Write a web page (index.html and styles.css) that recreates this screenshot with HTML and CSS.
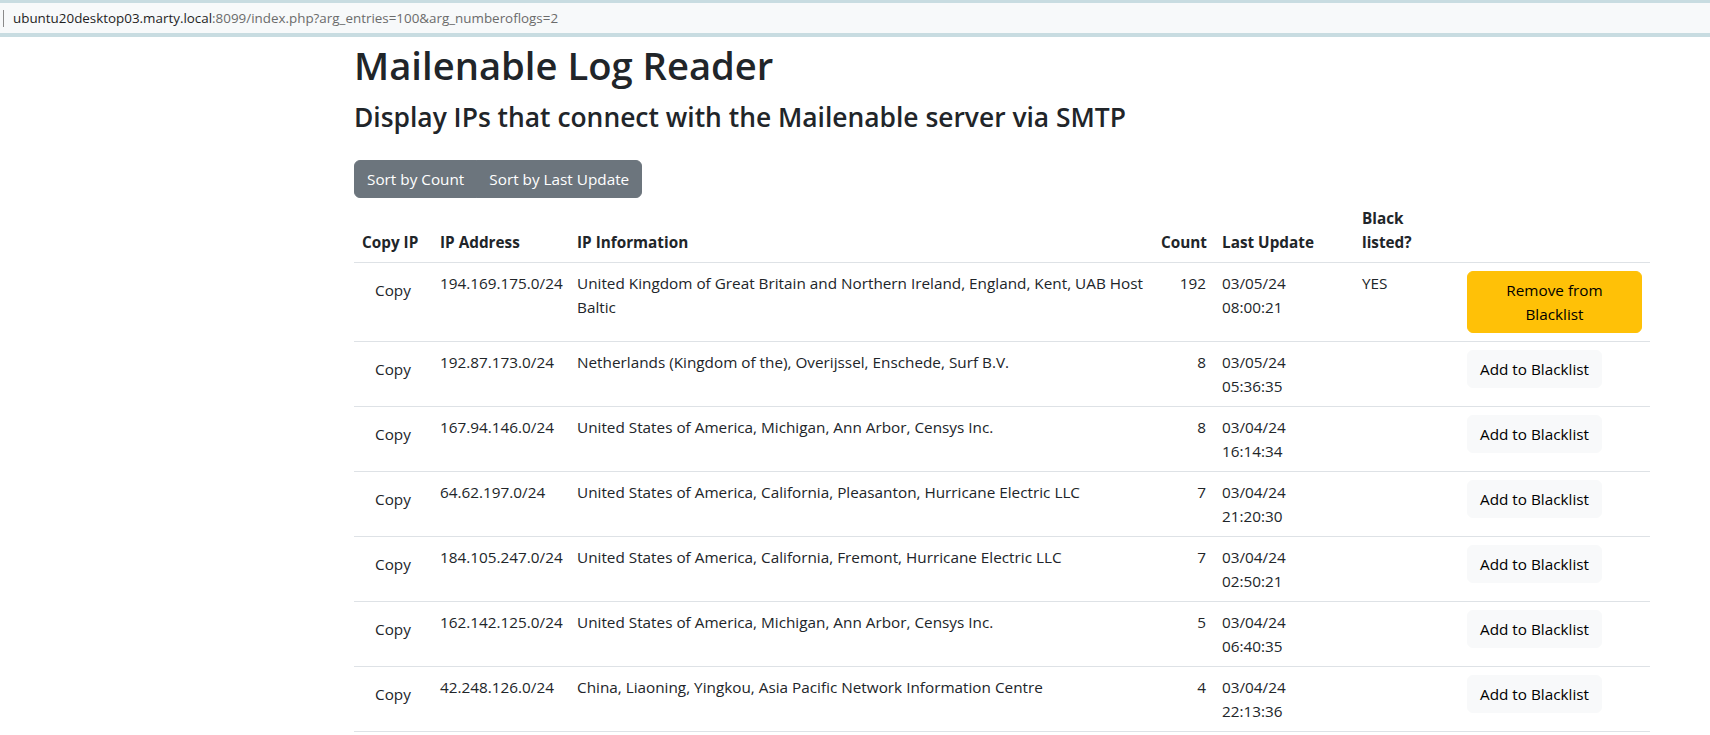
FILE: index.html
```html
<!DOCTYPE html>
<html lang="en">
<head>
<meta charset="utf-8">
<title>Mailenable Log Reader</title>
<link rel="stylesheet" href="styles.css">
</head>
<body>
<div class="urlbar">
  <span class="caret"></span>
  <span class="url"><span class="host">ubuntu20desktop03.marty.local</span><span class="path">:8099/index.php?arg_entries=100&amp;arg_numberoflogs=2</span></span>
</div>
<main class="container">
  <h1 class="title">Mailenable Log Reader</h1>
  <h3 class="subtitle">Display IPs that connect with the Mailenable server via SMTP</h3>
  <div class="btn-group">
    <button class="btn btn-secondary">Sort by Count</button>
    <button class="btn btn-secondary">Sort by Last Update</button>
  </div>
  <table class="table">
    <colgroup>
      <col class="c-copy"><col class="c-ip"><col class="c-info"><col class="c-count"><col class="c-date"><col class="c-bl"><col class="c-act">
    </colgroup>
    <thead>
      <tr>
        <th>Copy IP</th>
        <th>IP Address</th>
        <th>IP Information</th>
        <th>Count</th>
        <th>Last Update</th>
        <th><span class="blk">Black</span> <span class="blk">listed?</span></th>
        <th></th>
      </tr>
    </thead>
    <tbody>
      <tr>
        <td><button class="btn btn-plain">Copy</button></td>
        <td>194.169.175.0/24</td>
        <td>United Kingdom of Great Britain and Northern Ireland, England, Kent, UAB Host Baltic</td>
        <td class="num">192</td>
        <td><span class="blk">03/05/24</span> <span class="blk">08:00:21</span></td>
        <td>YES</td>
        <td><button class="btn btn-warning btn-wide">Remove from<br>Blacklist</button></td>
      </tr>
      <tr>
        <td><button class="btn btn-plain">Copy</button></td>
        <td>192.87.173.0/24</td>
        <td>Netherlands (Kingdom of the), Overijssel, Enschede, Surf B.V.</td>
        <td class="num">8</td>
        <td><span class="blk">03/05/24</span> <span class="blk">05:36:35</span></td>
        <td></td>
        <td><button class="btn btn-light">Add to Blacklist</button></td>
      </tr>
      <tr>
        <td><button class="btn btn-plain">Copy</button></td>
        <td>167.94.146.0/24</td>
        <td>United States of America, Michigan, Ann Arbor, Censys Inc.</td>
        <td class="num">8</td>
        <td><span class="blk">03/04/24</span> <span class="blk">16:14:34</span></td>
        <td></td>
        <td><button class="btn btn-light">Add to Blacklist</button></td>
      </tr>
      <tr>
        <td><button class="btn btn-plain">Copy</button></td>
        <td>64.62.197.0/24</td>
        <td>United States of America, California, Pleasanton, Hurricane Electric LLC</td>
        <td class="num">7</td>
        <td><span class="blk">03/04/24</span> <span class="blk">21:20:30</span></td>
        <td></td>
        <td><button class="btn btn-light">Add to Blacklist</button></td>
      </tr>
      <tr>
        <td><button class="btn btn-plain">Copy</button></td>
        <td>184.105.247.0/24</td>
        <td>United States of America, California, Fremont, Hurricane Electric LLC</td>
        <td class="num">7</td>
        <td><span class="blk">03/04/24</span> <span class="blk">02:50:21</span></td>
        <td></td>
        <td><button class="btn btn-light">Add to Blacklist</button></td>
      </tr>
      <tr>
        <td><button class="btn btn-plain">Copy</button></td>
        <td>162.142.125.0/24</td>
        <td>United States of America, Michigan, Ann Arbor, Censys Inc.</td>
        <td class="num">5</td>
        <td><span class="blk">03/04/24</span> <span class="blk">06:40:35</span></td>
        <td></td>
        <td><button class="btn btn-light">Add to Blacklist</button></td>
      </tr>
      <tr>
        <td><button class="btn btn-plain">Copy</button></td>
        <td>42.248.126.0/24</td>
        <td>China, Liaoning, Yingkou, Asia Pacific Network Information Centre</td>
        <td class="num">4</td>
        <td><span class="blk">03/04/24</span> <span class="blk">22:13:36</span></td>
        <td></td>
        <td><button class="btn btn-light">Add to Blacklist</button></td>
      </tr>
    </tbody>
  </table>
</main>
</body>
</html>
```

FILE: styles.css
```css
html, body {
  margin: 0;
  padding: 0;
  background: #fff;
}
body {
  font-family: "Open Sans", "Noto Sans", "Liberation Sans", sans-serif;
  font-size: 15.3px;
  line-height: 24px;
  color: #212529;
}

.urlbar {
  height: 30px;
  border-top: 3px solid #c8dce1;
  border-bottom: 4px solid #c8dce1;
  background: #f7f9fa;
  display: flex;
  align-items: center;
  padding-left: 3px;
  font-size: 13.4px;
}
.caret {
  width: 1px;
  height: 17px;
  background: #8a8a8a;
  margin-right: 9px;
}
.host { color: #1f1f1f; }
.path { color: #6b6b6b; }

.container {
  width: 1296px;
  margin-left: 354px;
  padding-top: 4px;
}

.title {
  margin: 0 0 11px;
  font-size: 38.2px;
  line-height: 48px;
  font-weight: 600;
}
.subtitle {
  margin: 0 0 26px;
  font-size: 26.4px;
  line-height: 34px;
  font-weight: 600;
}

.btn-group {
  display: inline-flex;
  vertical-align: top;
}
.btn {
  font: inherit;
  line-height: 24px;
  padding: 6px 12px;
  border: 1px solid transparent;
  border-radius: 6px;
  background: transparent;
  color: #212529;
  cursor: pointer;
}
.btn-secondary {
  background: #6c757d;
  border-color: #6c757d;
  color: #fff;
}
.btn-group .btn:first-child {
  border-top-right-radius: 0;
  border-bottom-right-radius: 0;
}
.btn-group .btn:last-child {
  margin-left: -1px;
  border-top-left-radius: 0;
  border-bottom-left-radius: 0;
}
.btn-warning {
  background: #ffc107;
  border-color: #ffc107;
  color: #000;
}
.btn-light {
  background: #f8f9fa;
  border-color: #f8f9fa;
  color: #000;
}
.btn-plain {
  color: #212529;
}
.btn-wide {
  width: 175px;
}

.table {
  width: 1296px;
  table-layout: fixed;
  border-collapse: collapse;
  margin-top: 0;
}
.c-copy { width: 78px; }
.c-ip { width: 137px; }
.c-info { width: 584px; }
.c-count { width: 61px; }
.c-date { width: 140px; }
.c-bl { width: 105px; }
.c-act { width: 191px; }

.table th,
.table td {
  padding: 8px;
  border-bottom: 1px solid #dee2e6;
  text-align: left;
  vertical-align: top;
}
.table thead th {
  vertical-align: bottom;
  font-weight: 700;
}
.table td.num {
  text-align: right;
}
.blk {
  display: block;
}
```
